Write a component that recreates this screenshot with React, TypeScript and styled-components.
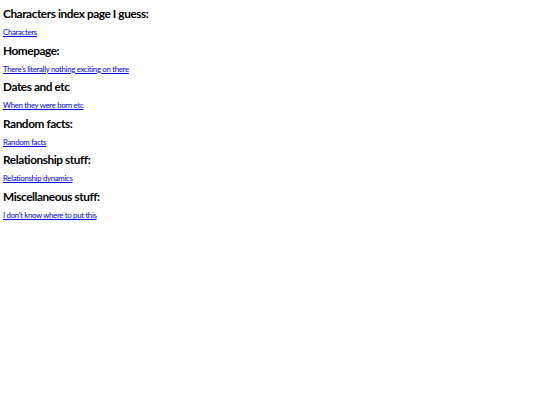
import React from "react";
import styled, { createGlobalStyle } from "styled-components";

const Global = createGlobalStyle`
  html, body { margin: 0; padding: 0; background: #fff; }
  body { padding: 3px; font-family: Lato, "Liberation Sans", sans-serif; }
`;

const Page = styled.div`
  display: flex;
  flex-direction: column;
`;

const Section = styled.section`
  display: flex;
  flex-direction: column;
  height: 36.6px;
`;

const Heading = styled.h2`
  margin: 4px 0 0 0;
  font-size: 11.8px;
  line-height: 14px;
  font-weight: 700;
  letter-spacing: -0.42px;
  color: #000;
`;

const LinkRow = styled.p`
  margin: 7px 0 0 0;
  font-size: 7.8px;
  line-height: 9px;
`;

const Link = styled.a`
  letter-spacing: -0.3px;
  color: #0000ee;
  text-decoration: underline;
`;

const items = [
  ["Characters index page I guess:", "Characters"],
  ["Homepage:", "There's literally nothing exciting on there"],
  ["Dates and etc", "When they were born etc"],
  ["Random facts:", "Random facts"],
  ["Relationship stuff:", "Relationship dynamics"],
  ["Miscellaneous stuff:", "I don't know where to put this"],
];

export default function App() {
  return (
    <Page>
      <Global />
      {items.map(([h, l]) => (
        <Section key={h}>
          <Heading>{h}</Heading>
          <LinkRow>
            <Link href="#">{l}</Link>
          </LinkRow>
        </Section>
      ))}
    </Page>
  );
}
